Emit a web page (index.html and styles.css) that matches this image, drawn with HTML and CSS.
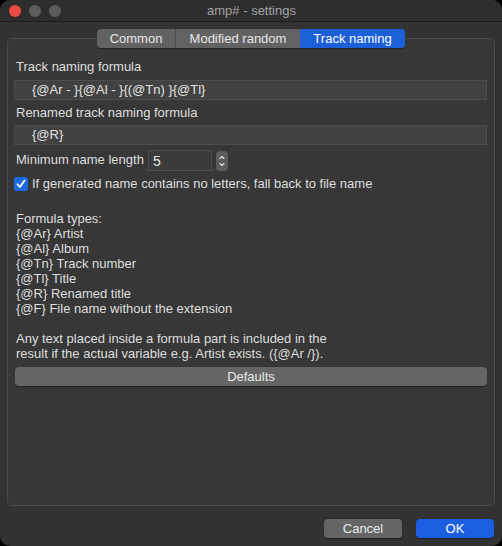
FILE: index.html
```html
<!DOCTYPE html>
<html>
<head>
<meta charset="utf-8">
<title>amp# - settings</title>
<link rel="stylesheet" href="styles.css">
</head>
<body>
<div class="window">
  <div class="titlebar">
    <div class="lights">
      <span class="light red"></span>
      <span class="light gray"></span>
      <span class="light gray"></span>
    </div>
    <div class="title">amp# - settings</div>
  </div>
  <div class="content">
    <div class="tabs-area">
      <div class="tabs">
        <div class="tab tab-common">Common</div>
        <div class="tab tab-modified">Modified random</div>
        <div class="tab tab-track active">Track naming</div>
      </div>
      <div class="groupbox">
        <div class="label">Track naming formula</div>
        <div class="field field-1">{@Ar - }{@Al - }{(@Tn) }{@Tl}</div>
        <div class="label label-2">Renamed track naming formula</div>
        <div class="field field-2">{@R}</div>
        <div class="min-row">
          <div class="min-label">Minimum name length</div>
          <div class="spin-field">5</div>
          <div class="stepper">
            <svg width="12" height="20" viewBox="0 0 12 20">
              <path d="M4 7.5 L6 5.5 L8 7.5" fill="none" stroke="#e8e8e8" stroke-width="1.1" stroke-linecap="round" stroke-linejoin="round"/>
              <path d="M4 12.5 L6 14.5 L8 12.5" fill="none" stroke="#e8e8e8" stroke-width="1.1" stroke-linecap="round" stroke-linejoin="round"/>
            </svg>
          </div>
        </div>
        <div class="check-row">
          <div class="checkbox">
            <svg width="14" height="14" viewBox="0 0 14 14">
              <path d="M3.5 7.3 L6 10 L10.5 3.5" fill="none" stroke="#ffffff" stroke-width="1.8" stroke-linecap="round" stroke-linejoin="round"/>
            </svg>
          </div>
          <div class="check-label">If generated name contains no letters, fall back to file name</div>
        </div>
        <div class="help">
          <div>Formula types:</div>
          <div>{@Ar} Artist</div>
          <div>{@Al} Album</div>
          <div>{@Tn} Track number</div>
          <div>{@Tl} Title</div>
          <div>{@R} Renamed title</div>
          <div>{@F} File name without the extension</div>
          <div class="blank"></div>
          <div>Any text placed inside a formula part is included in the</div>
          <div>result if the actual variable e.g. Artist exists. ({@Ar /}).</div>
        </div>
        <div class="defaults-btn">Defaults</div>
      </div>
    </div>
    <div class="buttons">
      <div class="btn btn-cancel">Cancel</div>
      <div class="btn btn-ok">OK</div>
    </div>
  </div>
</div>
</body>
</html>
```
FILE: styles.css
```css
html, body {
  margin: 0;
  padding: 0;
  background: #000000;
}
body {
  width: 502px;
  height: 546px;
  overflow: hidden;
  font-family: "Liberation Sans", Arial, sans-serif;
  font-size: 13px;
  color: #dedede;
}
.window {
  width: 502px;
  height: 546px;
  box-sizing: border-box;
  background: #323232;
  border-radius: 10px;
  overflow: hidden;
  display: flex;
  flex-direction: column;
}
.titlebar {
  height: 22px;
  flex: none;
  background: #2d2d2d;
  border-bottom: 1px solid #1b1b1b;
  box-sizing: border-box;
  display: flex;
  align-items: center;
  position: relative;
}
.lights {
  display: flex;
  gap: 8px;
  padding-left: 9px;
  padding-top: 1px;
}
.light {
  width: 12px;
  height: 12px;
  border-radius: 50%;
  display: block;
}
.red { background: #ec4a45; }
.gray { background: #5c5c5c; }
.title {
  position: absolute;
  left: 0;
  right: 0;
  top: 0;
  line-height: 22px;
  text-align: center;
  color: #a3a3a3;
  font-size: 13px;
  padding-left: 1px;
}
.content {
  flex: 1;
  display: flex;
  flex-direction: column;
  padding: 7px 7px 0 7px;
}
.tabs-area {
  display: flex;
  flex-direction: column;
  align-items: center;
}
.tabs {
  display: flex;
  height: 19px;
  border-radius: 4px;
  overflow: hidden;
  background: #626262;
  position: relative;
  z-index: 2;
  margin-bottom: -10px;
  box-shadow: 0 0.5px 1px rgba(0,0,0,0.4);
}
.tab {
  line-height: 19px;
  text-align: center;
  color: #e6e6e6;
  font-size: 13px;
}
.tab-common { width: 78px; border-right: 1px solid #4c4c4c; }
.tab-modified { width: 124px; }
.tab-track { width: 105px; }
.tab.active {
  background: #1b5fd9;
  color: #ffffff;
}
.groupbox {
  align-self: stretch;
  height: 468px;
  box-sizing: border-box;
  border: 1px solid #4b4b4b;
  border-radius: 5px;
  background: #373737;
  padding: 20px 7px 0 6px;
  display: flex;
  flex-direction: column;
}
.label {
  line-height: 16px;
  padding-left: 2px;
}
.label-2 {
  margin-top: 5px;
}
.field {
  height: 20px;
  box-sizing: border-box;
  background: #424242;
  border: 1px solid #4d4d4d;
  padding-left: 17px;
  line-height: 18px;
  color: #e2e2e2;
}
.field-1 { margin-top: 5px; }
.field-2 { margin-top: 4px; }
.min-row {
  margin-top: 5px;
  display: flex;
  align-items: center;
  height: 21px;
}
.min-label {
  padding-left: 2px;
  width: 132px;
  line-height: 16px;
  margin-top: -2px;
}
.spin-field {
  width: 64px;
  height: 21px;
  box-sizing: border-box;
  background: #3b3b3b;
  border: 1px solid #4e4e4e;
  padding-left: 4px;
  line-height: 20px;
  font-size: 14px;
  color: #e6e6e6;
}
.stepper {
  margin-left: 4px;
  width: 12px;
  height: 20px;
  border-radius: 4px;
  background: #5c5c5c;
  display: flex;
}
.check-row {
  margin-top: 6px;
  display: flex;
  align-items: center;
  height: 14px;
}
.checkbox {
  width: 14px;
  height: 14px;
  border-radius: 3px;
  background: #1d6ae5;
  display: flex;
  flex: none;
}
.check-label {
  margin-left: 4px;
  line-height: 16px;
}
.help {
  margin-top: 20px;
  padding-left: 2px;
  line-height: 15px;
}
.blank {
  height: 15px;
}
.defaults-btn {
  margin-top: 6px;
  margin-left: 1px;
  height: 19px;
  line-height: 19px;
  text-align: center;
  background: #656565;
  border-radius: 4px;
  color: #e8e8e8;
  box-shadow: 0 0.5px 1px rgba(0,0,0,0.4);
}
.buttons {
  display: flex;
  justify-content: flex-end;
  gap: 14px;
  margin-top: 13px;
  padding-right: 1px;
}
.btn {
  width: 78px;
  height: 19px;
  line-height: 19px;
  text-align: center;
  border-radius: 4px;
  color: #ececec;
  box-shadow: 0 0.5px 1px rgba(0,0,0,0.4);
}
.btn-cancel { background: #656565; }
.btn-ok { background: #1b5fe0; color: #ffffff; }
```
